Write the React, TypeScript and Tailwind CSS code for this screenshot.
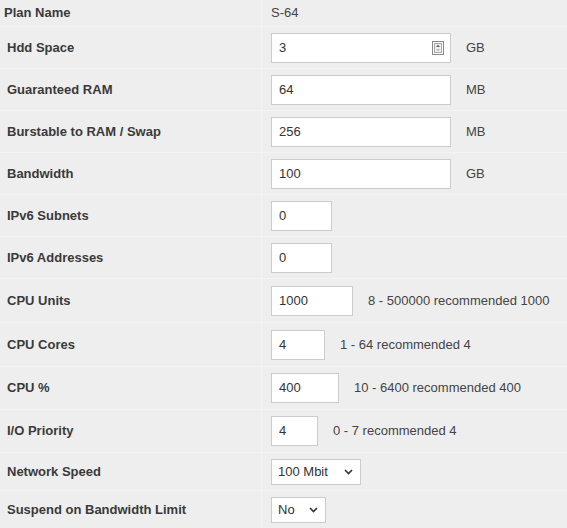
import React from "react";

type Row = {
  label: string;
  value: string;
  w: string;
  h: string;
  unit?: string;
  hint?: string;
  spin?: boolean;
  select?: boolean;
};

const rows: Row[] = [
  { label: "Hdd Space", value: "3", w: "w-[180px]", h: "h-[42px]", unit: "GB", spin: true },
  { label: "Guaranteed RAM", value: "64", w: "w-[180px]", h: "h-[42px]", unit: "MB" },
  { label: "Burstable to RAM / Swap", value: "256", w: "w-[180px]", h: "h-[42px]", unit: "MB" },
  { label: "Bandwidth", value: "100", w: "w-[180px]", h: "h-[42px]", unit: "GB" },
  { label: "IPv6 Subnets", value: "0", w: "w-[61px]", h: "h-[42px]" },
  { label: "IPv6 Addresses", value: "0", w: "w-[61px]", h: "h-[42px]" },
  { label: "CPU Units", value: "1000", w: "w-[82px]", h: "h-[44px]", hint: "8 - 500000 recommended 1000" },
  { label: "CPU Cores", value: "4", w: "w-[54px]", h: "h-[44px]", hint: "1 - 64 recommended 4" },
  { label: "CPU %", value: "400", w: "w-[68px]", h: "h-[43px]", hint: "10 - 6400 recommended 400" },
  { label: "I/O Priority", value: "4", w: "w-[47px]", h: "h-[43px]", hint: "0 - 7 recommended 4" },
  { label: "Network Speed", value: "100 Mbit", w: "w-[90px]", h: "h-[38px]", select: true },
  { label: "Suspend on Bandwidth Limit", value: "No", w: "w-[55px]", h: "h-[38px]", select: true },
];

function Spin() {
  return (
    <svg width="12" height="14" viewBox="0 0 12 14" className="shrink-0">
      <rect x="0.5" y="0.5" width="11" height="13" fill="#fff" stroke="#888" />
      <rect x="2.5" y="2.5" width="7" height="9" fill="#eee" stroke="#aaa" />
      <path d="M4 6 L6 3.5 L8 6 Z" fill="#666" />
      <path d="M4 8 L8 8 L6 10.5 Z" fill="#bbb" />
    </svg>
  );
}

function Chevron() {
  return (
    <svg width="9" height="6" viewBox="0 0 9 6" className="shrink-0">
      <path d="M1 1 L4.5 4.5 L8 1" fill="none" stroke="#333" strokeWidth="1.6" />
    </svg>
  );
}

export default function App() {
  return (
    <div
      className="w-[567px] h-[528px] overflow-hidden bg-[#eeeeee] text-[13px] text-[#444]"
      style={{ fontFamily: '"Liberation Sans", Arial, sans-serif' }}
    >
      <div className="flex h-[27px] border-b border-[#f4f4f4]">
        <div className="w-[262px] border-r border-[#f4f4f4] pl-[4px] flex items-center font-bold text-[#3a3a3a]">
          Plan Name
        </div>
        <div className="pl-[9px] flex items-center">S-64</div>
      </div>
      {rows.map((r) => (
        <div key={r.label} className={`flex ${r.h} border-b border-[#f4f4f4]`}>
          <div className="w-[262px] border-r border-[#f4f4f4] pl-[7px] flex items-center font-bold text-[#3a3a3a]">
            {r.label}
          </div>
          <div className="flex items-center pl-[9px]">
            {r.select ? (
              <div
                className={`${r.w} h-[26px] bg-white border border-[#cccccc] flex items-center justify-between pl-[6px] pr-[7px] text-[#333]`}
              >
                <span>{r.value}</span>
                <Chevron />
              </div>
            ) : (
              <div
                className={`${r.w} h-[30px] bg-white border border-[#cccccc] flex items-center justify-between pl-[7px] pr-[6px] text-[#333]`}
              >
                <span>{r.value}</span>
                {r.spin && <Spin />}
              </div>
            )}
            {r.unit && <span className="ml-[15px]">{r.unit}</span>}
            {r.hint && <span className="ml-[15px]">{r.hint}</span>}
          </div>
        </div>
      ))}
    </div>
  );
}
